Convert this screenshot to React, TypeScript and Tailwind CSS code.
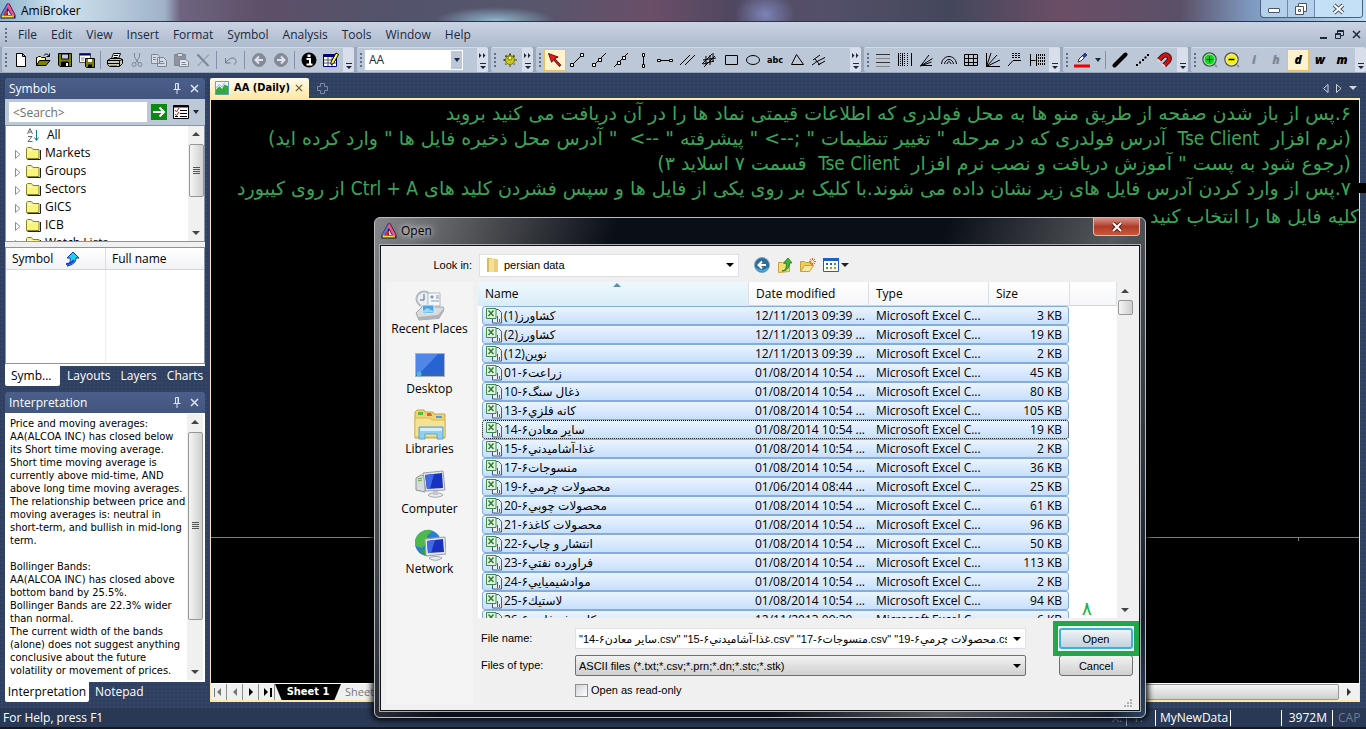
import React from 'react';
import clsx from 'clsx';

type Children = { children?: React.ReactNode };

const files = [
  ['(1)کشاورز', '12/11/2013 09:39 ...', '3 KB'],
  ['(2)کشاورز', '12/11/2013 09:39 ...', '19 KB'],
  ['(12)نوین', '12/11/2013 09:39 ...', '2 KB'],
  ['01-۶زراعت', '01/08/2014 10:54 ...', '45 KB'],
  ['10-۶ذغال سنگ', '01/08/2014 10:54 ...', '80 KB'],
  ['13-۶کانه فلزي', '01/08/2014 10:54 ...', '105 KB'],
  ['14-۶سایر معادن', '01/08/2014 10:54 ...', '19 KB'],
  ['15-۶غذا-آشامیدني', '01/08/2014 10:54 ...', '2 KB'],
  ['17-۶منسوجات', '01/08/2014 10:54 ...', '36 KB'],
  ['19-۶محصولات چرمي', '01/06/2014 08:44 ...', '25 KB'],
  ['20-۶محصولات چوبي', '01/08/2014 10:54 ...', '61 KB'],
  ['21-۶محصولات کاغذ', '01/08/2014 10:54 ...', '96 KB'],
  ['22-۶انتشار و چاپ', '01/08/2014 10:54 ...', '50 KB'],
  ['23-۶فراورده نفتي', '01/08/2014 10:54 ...', '113 KB'],
  ['24-۶موادشیمیایي', '01/08/2014 10:54 ...', '2 KB'],
  ['25-۶لاستیك', '01/08/2014 10:54 ...', '94 KB'],
  ['26-۶کاني غیرفلزي', '12/11/2013 09:39 ...', '6 KB'],
];

const focusedFile = 6;

const interpretation = [
  'Price and moving averages:',
  'AA(ALCOA INC) has closed below',
  'its Short time moving average.',
  'Short time moving average is',
  'currently above mid-time, AND',
  'above long time moving averages.',
  'The relationship between price and',
  'moving averages is: neutral in',
  'short-term, and bullish in mid-long',
  'term.',
  '',
  'Bollinger Bands:',
  'AA(ALCOA INC) has closed above',
  'bottom band by 25.5%.',
  'Bollinger Bands are 22.3% wider',
  'than normal.',
  'The current width of the bands',
  '(alone) does not suggest anything',
  'conclusive about the future',
  'volatility or movement of prices.',
];

/* ---------- icons ---------- */

function Ico({ children, size = 16 }: Children & { size?: number }) {
  return (
    <svg
      width={size}
      height={size}
      viewBox="0 0 16 16"
      fill="none"
      stroke="#000"
      className="shrink-0"
      aria-hidden="true"
    >
      {children}
    </svg>
  );
}

const Logo = () => (
  <Ico>
    <path d="M7 .5h2.500L15.500 12v3.500H.5V12z" fill="#1b1330" stroke="none" />
    <path d="M7 1.500L1 12l2 1.500L8.500 4z" fill="#5a78e0" stroke="none" />
    <path d="M7.500 1H9l6 11.500-2.500 1L7 3.500z" fill="#f0508c" stroke="none" />
    <path d="M1.500 12.500h10.500l2.500 2H1.500z" fill="#f8e040" stroke="none" />
    <path d="M3.500 12l3-5.500 2 3L7 12z" fill="#d82828" stroke="none" />
    <path d="M8 7l3 5H8z" fill="#c9d4f8" stroke="none" />
    <path d="M12 12.500l1-.5 1.500 2h-2z" fill="#f8a030" stroke="none" />
  </Ico>
);

const icons = {
  new: (
    <Ico>
      <path d="M3.500 1.500h6l3 3v10h-9zM9.500 1.500v3h3" fill="#fff" />
    </Ico>
  ),
  open: (
    <Ico>
      <path d="M1.500 13.500v-8h1l1-1h2l1 1h4v3" fill="#ffff9c" />
      <path d="M1.500 13.500l3-5h10.500l-4 5z" fill="#808000" />
      <path d="M9 3.500c1-2 4-2 5 .5M14.500 1.500v3h-3" />
    </Ico>
  ),
  save: (
    <Ico>
      <path d="M1.500 1.500h13v13H3l-1.500-1.500z" fill="#808000" />
      <path d="M4.500 2h7v5h-7z" fill="#c3cbdb" />
      <path d="M4.500 10h7v4.500h-7z" fill="#000" />
      <path d="M9 11h2v3H9z" fill="#fff" stroke="none" />
    </Ico>
  ),
  saveAll: (
    <Ico>
      <path d="M.5 1.500h11v9H.5z" fill="#fff" stroke="#555" />
      <path d="M.5 2.500h11" stroke="#00007c" strokeWidth="2" />
      <path d="M2 6h4M2 8h3" stroke="#888" />
      <path d="M6.500 6.500h9v9h-8l-1-1z" fill="#808000" />
      <path d="M9 7h4v3H9z" fill="#fff" stroke="none" />
      <path d="M9 12.500h4v3H9z" fill="#000" stroke="none" />
    </Ico>
  ),
  print: (
    <Ico>
      <path d="M4.500 6.500l2-5h7l-2 5" fill="#fff" />
      <path d="M7 3.500h4M6.500 5.500h4" />
      <path d="M.5 8.500l3-2h10l2 1v4l-3 3h-10l-2-2z" fill="#c8c8b0" />
      <path d="M.5 8.500h12v5.500M12.500 8.500l3-1M1 11.500h11" />
      <path d="M3 13.500h7" stroke="#a5a500" />
    </Ico>
  ),
  cut: (
    <Ico>
      <g stroke="#7f8794">
        <path d="M5.500 1v4l4 6M10.500 1v4l-4 6" />
        <circle cx="5" cy="12.500" r="2" />
        <circle cx="11" cy="12.500" r="2" />
      </g>
    </Ico>
  ),
  copy: (
    <Ico>
      <g stroke="#7f8794" fill="#d3dae6">
        <path d="M.5 2.500h6l2 2v7h-8zM6.500 5.500h6l3 3v6h-9z" />
        <path d="M2 5.500h3M2 7.500h3M8.500 9.500h4M8.500 11.500h5" />
      </g>
    </Ico>
  ),
  paste: (
    <Ico>
      <path d="M1.500 2.500h11v11h-11z" fill="#8e95a1" stroke="#7f8794" />
      <path d="M4.500 1.500h5v3h-5z" fill="#d3dae6" stroke="#7f8794" />
      <path d="M6.500 7.500h6l3 2v5h-9z" fill="#e0e5ee" stroke="#7f8794" />
      <path d="M8.500 10.500h4M8.500 12.500h5" stroke="#7f8794" />
    </Ico>
  ),
  del: (
    <Ico>
      <path d="M2 2.500l11 11.500M14 2.500L2.500 14" stroke="#7f8794" />
      <path d="M2.500 2.500l11 11.500" stroke="#7f8794" strokeWidth="2" />
    </Ico>
  ),
  undo: (
    <Ico>
      <path d="M2.500 6v5h5M3 10.500c3-5 9-6 10-2 .5 2-.5 3-2 4" stroke="#6f7886" />
    </Ico>
  ),
  back: (
    <Ico>
      <circle cx="8" cy="8" r="6.500" fill="#858b96" stroke="#858b96" />
      <path d="M12 8H5M8 4.500L4.500 8 8 11.500" stroke="#dfe4ee" strokeWidth="2" />
    </Ico>
  ),
  forward: (
    <Ico>
      <circle cx="8" cy="8" r="6.500" fill="#858b96" stroke="#858b96" />
      <path d="M4 8h7M8 4.500L11.500 8 8 11.500" stroke="#dfe4ee" strokeWidth="2" />
    </Ico>
  ),
  info: (
    <Ico>
      <circle cx="8" cy="8" r="7.500" fill="#000" stroke="none" />
      <path d="M5.500 7H9v5M5.500 12.500h6" stroke="#fff" strokeWidth="2" />
      <path d="M6.500 2.500h3v2.500h-3z" fill="#fff" stroke="none" />
    </Ico>
  ),
  edit: (
    <Ico>
      <path d="M.5 2.500h13v12H.5z" fill="#fff" stroke="#00007c" />
      <path d="M1 3.500h12" stroke="#00007c" strokeWidth="3" />
      <path d="M1 8h12M1 11h12M5 5v9M9 5v9" stroke="#555" />
      <path d="M8 10l5-9 2.500 1.500-5 9-2.500 1z" fill="#ffff60" />
    </Ico>
  ),
  gear: (
    <Ico>
      <path
        d="M8 1.500v13M1.500 8h13M3.500 3.500l9 9M12.500 3.500l-9 9"
        stroke="#4a4a10"
        strokeWidth="2"
        strokeDasharray="2 1"
      />
      <circle cx="8" cy="8" r="4.500" fill="#c8c820" stroke="#77770c" />
      <circle cx="8" cy="6" r="2" fill="#ffff70" stroke="#77770c" />
    </Ico>
  ),
  arrow: (
    <Ico>
      <path d="M1 1l3.500 10 2-2.500 6 6.500 2-2-6-6L12 5z" fill="#555" stroke="none" />
      <path d="M1.500 1.500l3 8.500 2-2.500 6 7 1-1.500-6-6.500 3.500-1.500z" fill="#f01818" stroke="#600" strokeWidth=".6" />
    </Ico>
  ),
  line: (
    <Ico>
      <path d="M4 12l8-8" />
      <path d="M1.500 11.500h3v3h-3zM11.500 1.500h3v3h-3z" fill="#fff" />
    </Ico>
  ),
  ray: (
    <Ico>
      <path d="M2 14L15 1" />
      <path d="M1.500 11.500h3v3h-3zM7.500 6.500h3v3h-3z" fill="#fff" />
    </Ico>
  ),
  extended: (
    <Ico>
      <path d="M1 15L15 1" />
      <path d="M4.500 9.500h3v3h-3zM9.500 4.500h3v3h-3z" fill="#fff" />
    </Ico>
  ),
  vertical: (
    <Ico>
      <path d="M8.500 2v12" />
      <path d="M7.500 1.500h2v3h-2zM7.500 12.500h2v3h-2z" fill="#fff" />
    </Ico>
  ),
  horizontal: (
    <Ico>
      <path d="M2 8.500h12" />
      <path d="M.5 7.500h3v2h-3zM12.500 7.500h3v2h-3z" fill="#fff" />
    </Ico>
  ),
  parallel: (
    <Ico>
      <path d="M1 13L11 3M6 13L16 3" />
    </Ico>
  ),
  hatch: (
    <Ico>
      <path d="M1 12L11 2M3 15L14 4M2 8l13-2M2 12l11-3M5 4v9M9 3v10M12 1v9" />
    </Ico>
  ),
  rect: (
    <Ico>
      <path d="M2.500 3.500h12v9h-12z" />
    </Ico>
  ),
  ellipse: (
    <Ico>
      <ellipse cx="8" cy="8" rx="6.500" ry="4.500" />
    </Ico>
  ),
  triangle: (
    <Ico>
      <path d="M7.500 2.500l7 10h-12z" />
    </Ico>
  ),
  pitchfork: (
    <Ico>
      <path d="M2 8l7-5M4 10.500l10-5M7 13l7-4M4 7l5 6M1 13l3-2" />
    </Ico>
  ),
  fibRet: (
    <Ico>
      <path d="M1 2.500h14M1 10.500h14" stroke="#333" />
      <path d="M1 6.500h14M1 14.500h14" stroke="#888" />
    </Ico>
  ),
  fibTime: (
    <Ico>
      <path d="M1.500 1v13M5.500 1v13M14.500 1v13" />
      <path d="M3.500 1v13M7.500 1v13M10.500 1v13" strokeDasharray="1 1" />
    </Ico>
  ),
  fan: (
    <Ico>
      <path d="M1.500 14L10 3M1.500 14l12-7.500M1.500 14l11-4M2 13.500h11" />
    </Ico>
  ),
  arcs: (
    <Ico>
      <path d="M.5 12c1-10 14-10 15 0M3.500 12c1-6 8-6 9 0M6 12c.5-3 3.500-3 4 0" />
    </Ico>
  ),
  gannSquare: (
    <Ico>
      <path d="M1.500 2.500h13v11h-13zM5.500 2.500v11M10.500 2.500v11M1.500 6.500h13M1.500 10.500h13" />
    </Ico>
  ),
  gannFan: (
    <Ico>
      <path d="M1.500 1v13.500H15M1.500 14.500L6 1M1.500 14.500L12 3M1.500 14.500L15 8" />
    </Ico>
  ),
  fibExt: (
    <Ico>
      <path d="M1 14l5-5.500M6 8.500h8" />
      <path d="M5 1.500h9M5 3.500h9M5 5.500h9" strokeDasharray="2 1" />
    </Ico>
  ),
  timeExt: (
    <Ico>
      <path d="M1.500 2v12M1.500 8.500h5M7.500 2v12" />
      <path d="M9.500 2v12M11.500 2v12M13.500 2v12M15.500 2v12" strokeDasharray="2 1" />
    </Ico>
  ),
  color: (
    <Ico>
      <path d="M4 10l1-3 6-6 2 2-6 6z" fill="#fff" stroke="#333" />
      <path d="M8 4l3-3 2 2-3 3z" fill="#2c3fa0" stroke="none" />
      <path d="M0 12.500h16v3H0z" fill="#f00000" stroke="none" />
    </Ico>
  ),
  thick: (
    <Ico>
      <path d="M2.500 13.500l11-11" strokeWidth="4" strokeLinecap="round" />
    </Ico>
  ),
  dotted: (
    <Ico>
      <path d="M2 13h2M5 10.500h2M8 8h2M10.500 5.500h2M13 3h2" strokeWidth="2" />
    </Ico>
  ),
  magnet: (
    <Ico>
      <path d="M3 8l4-4c4-3 8 1 5.500 5L8 13.500" stroke="#4a0808" strokeWidth="5" />
      <path d="M3 8l4-4c4-3 8 1 5.500 5L8 13.500" stroke="#c81818" strokeWidth="3" />
      <path d="M1.500 7.500l3 2.500M6 12l3 3" stroke="#d8d8d8" strokeWidth="2" />
    </Ico>
  ),
  zoomIn: (
    <Ico>
      <circle cx="7.500" cy="7.500" r="6.500" fill="#10d818" stroke="#3d5548" strokeWidth="1.500" />
      <circle cx="7.500" cy="7.500" r="5.500" stroke="#cfe8d0" />
      <path d="M13 13l2 2" stroke="#8d94a0" strokeWidth="2" />
      <path d="M4.500 7.500h6M7.500 4.500v6" />
    </Ico>
  ),
  zoomOut: (
    <Ico>
      <circle cx="7.500" cy="7.500" r="6.500" fill="#f8f010" stroke="#555538" strokeWidth="1.500" />
      <circle cx="7.500" cy="7.500" r="5.500" stroke="#efefcf" />
      <path d="M13 13l2 2" stroke="#8d94a0" strokeWidth="2" />
      <path d="M4.500 7.500h6" strokeWidth="1.500" />
    </Ico>
  ),
};

type IconName = keyof typeof icons;

const Folder = () => (
  <Ico>
    <path d="M2.500 14.500h13V5" stroke="#222" />
    <path d="M1.500 13.500v-10l1-1h4l1.500 2h6v9z" fill="#f8f47c" stroke="#8a8428" />
    <path d="M2.500 5.500h5" stroke="#fffde0" />
  </Ico>
);

const ExcelIcon = () => (
  <Ico>
    <path d="M6.500 1.500h6l3 3v10.500h-9z" fill="#e9eff8" stroke="#405a80" />
    <path d="M11.500 8v6M13.500 11v3" stroke="#3c5f98" />
    <path d="M.5.500h9.500v10H.5z" fill="#e6f4e2" stroke="#3f8a4a" />
    <path d="M2.500 2.500l5 5.500M7.500 2.500l-5 5.500" stroke="#2b7d38" strokeWidth="1.500" />
  </Ico>
);

const Pin = () => (
  <svg width="8" height="11" viewBox="0 0 8 11" fill="none" stroke="#dfe5f0" aria-hidden="true">
    <path d="M2.500 6.500v-6h3v6M.5 6.500h7M4 7v4M5 1v5" />
  </svg>
);

const Cross = ({ color = '#dfe5f0', size = 9 }: { color?: string; size?: number }) => (
  <svg width={size} height={size} viewBox="0 0 9 9" fill="none" stroke={color} strokeWidth="1.500" aria-hidden="true">
    <path d="M1 1l7 7M8 1L1 8" />
  </svg>
);

const Caret = ({ dir = 'down', color = '#222' }: { dir?: 'up' | 'down' | 'left' | 'right'; color?: string }) => {
  const d = {
    up: 'M0 6l4-4 4 4z',
    down: 'M0 2l4 4 4-4z',
    left: 'M6 0L2 4l4 4z',
    right: 'M2 0l4 4-4 4z',
  }[dir];
  return (
    <svg width="8" height="8" viewBox="0 0 8 8" fill={color} aria-hidden="true">
      <path d={d} />
    </svg>
  );
};

/* ---------- toolbar ---------- */

function Tool({ name, active }: { name: IconName; active?: boolean }) {
  return (
    <button
      type="button"
      aria-label={name}
      className={clsx(
        'flex h-[22px] w-[22px] shrink-0 items-center justify-center',
        active && 'border border-[#e5c365] bg-[#fff3cf]'
      )}
    >
      {icons[name]}
    </button>
  );
}

function Letter({ children, active, muted }: Children & { active?: boolean; muted?: boolean }) {
  return (
    <button
      type="button"
      className={clsx(
        "flex h-[22px] w-[22px] shrink-0 items-center justify-center font-['Open_Sans',sans-serif] text-[12px] leading-4 font-extrabold italic",
        active && 'border border-[#e5c365] bg-[#fff3cf]',
        muted ? 'text-[#7f8794]' : 'text-black'
      )}
    >
      {children}
    </button>
  );
}

const Divider = () => <span className="mx-[2px] h-[18px] w-[2px] shrink-0 border-l border-[#8591a8]" />;

const Overflow = ({ more }: { more?: boolean }) => (
  <button
    type="button"
    aria-label="Toolbar options"
    className="ml-auto flex h-full w-[11px] shrink-0 flex-col items-center justify-end gap-[5px] bg-[#d8dfea] pb-[3px]"
  >
    {more && (
      <svg width="7" height="5" viewBox="0 0 7 5" fill="#1b293e" aria-hidden="true">
        <path d="M0 0l2.500 2.500L0 5zM4 0l2.500 2.500L4 5z" />
      </svg>
    )}
    <svg width="6" height="6" viewBox="0 0 6 6" fill="#1b293e" aria-hidden="true">
      <path d="M0 0h6v1H0zM0 3h6L3 6z" />
    </svg>
  </button>
);

function Group({ children, width, more }: Children & { width: string; more?: boolean }) {
  return (
    <div className={clsx('flex h-[25px] items-center overflow-hidden rounded-[2px] border-t border-[#d3dbe7] bg-[#bcc7d8]', width)}>
      <span className="mx-[3px] h-[14px] w-[2px] shrink-0 bg-[repeating-linear-gradient(#5f6f8c_0_2px,transparent_2px_4px)]" />
      {children}
      <Overflow more={more} />
    </div>
  );
}

function Toolbar() {
  return (
    <div className="flex h-[26px] shrink-0 gap-[3px] bg-[#9ba9c0] pl-[2px]">
      <Group width="w-[352px] shrink-0">
        <Tool name="new" />
        <Tool name="open" />
        <Tool name="save" />
        <Tool name="saveAll" />
        <Divider />
        <Tool name="print" />
        <Tool name="cut" />
        <Tool name="copy" />
        <Tool name="paste" />
        <Tool name="del" />
        <Divider />
        <Tool name="undo" />
        <Divider />
        <Tool name="back" />
        <Tool name="forward" />
        <Divider />
        <Tool name="info" />
        <Tool name="edit" />
      </Group>
      <Group width="w-[131px] shrink-0" more>
        <div className="flex h-[20px] w-[98px] border border-white bg-white">
          <input
            aria-label="Ticker"
            defaultValue="AA"
            className="w-full min-w-0 px-[3px] text-[12px] leading-4 text-[#1b293e]"
          />
          <button type="button" aria-label="Choose ticker" className="flex w-[11px] shrink-0 items-center justify-center bg-[#bcc7d8]">
            <svg width="6" height="4" viewBox="0 0 6 4" fill="#1b293e" aria-hidden="true">
              <path d="M0 0h6L3 4z" />
            </svg>
          </button>
        </div>
      </Group>
      <Group width="w-[42px] shrink-0" more>
        <Tool name="gear" />
      </Group>
      <Group width="w-[325px] shrink-0" more>
        <Tool name="arrow" active />
        <Tool name="line" />
        <Tool name="ray" />
        <Tool name="extended" />
        <Tool name="vertical" />
        <Tool name="horizontal" />
        <Tool name="parallel" />
        <Tool name="hatch" />
        <Tool name="rect" />
        <Tool name="ellipse" />
        <button type="button" className="w-[22px] shrink-0 text-center font-['DejaVu_Sans_Condensed',sans-serif] text-[9px] leading-4 font-bold text-black">
          abc
        </button>
        <Tool name="triangle" />
        <Tool name="pitchfork" />
      </Group>
      <Group width="w-[196px] shrink-0">
        <Tool name="fibRet" />
        <Tool name="fibTime" />
        <Tool name="fan" />
        <Tool name="arcs" />
        <Tool name="gannSquare" />
        <Tool name="gannFan" />
        <Tool name="fibExt" />
        <Tool name="timeExt" />
      </Group>
      <Group width="w-[125px] shrink-0">
        <Tool name="color" />
        <button type="button" aria-label="Line colours" className="flex w-[10px] shrink-0 justify-center">
          <svg width="6" height="4" viewBox="0 0 6 4" fill="#1b293e" aria-hidden="true">
            <path d="M0 0h6L3 4z" />
          </svg>
        </button>
        <Divider />
        <Tool name="thick" />
        <Tool name="dotted" />
        <Tool name="magnet" />
      </Group>
      <Group width="min-w-0 flex-1">
        <Tool name="zoomIn" />
        <Tool name="zoomOut" />
        <Letter muted>i</Letter>
        <Letter muted>h</Letter>
        <Letter active>d</Letter>
        <Letter>w</Letter>
        <Letter>m</Letter>
      </Group>
    </div>
  );
}

/* ---------- window chrome ---------- */

function TitleBar() {
  return (
    <header className="flex h-[22px] shrink-0 items-start border-b border-[#38303e] bg-[radial-gradient(60px_14px_at_495px_100%,#8fb8cc,transparent),radial-gradient(30px_24px_at_765px_70%,#7d84b8,transparent),linear-gradient(90deg,#8fb4cc_0,#cfe2f0_60px,#b4c8da_120px,#9fb2c8_165px,#6f6480_180px,#5d5068_260px,#53536c_400px,#57566c_540px,#6b4e68_650px,#504860_730px,#55506a_820px,#43475c_950px,#6b4e66_1060px,#5a5068_1180px,#7d98be_1250px,#c0dcf2)]">
      <div className="flex h-[21px] items-center gap-[5px]">
        <Logo />
        <h1 className="text-[12px] leading-4 text-black">AmiBroker</h1>
      </div>
      <div className="mr-[3px] ml-auto flex h-[18px] overflow-hidden rounded-b-[4px] border border-t-0 border-[#48607e] bg-[#b5d0ea]">
        <button type="button" aria-label="Minimize" className="flex w-[27px] items-center justify-center border-r border-[#6d88a8] pt-[3px]">
          <span className="h-[5px] w-[12px] rounded-[1px] border border-[#4a5568] bg-white" />
        </button>
        <button type="button" aria-label="Restore" className="flex w-[27px] items-center justify-center border-r border-[#6d88a8]">
          <svg width="12" height="12" viewBox="0 0 12 12" fill="#fff" stroke="#4a5568" aria-hidden="true">
            <path d="M3.500.5h8v8h-8z" />
            <path d="M.5 3.500h8v8h-8zM3.500 6.500h2v2h-2z" />
          </svg>
        </button>
        <button type="button" aria-label="Close" className="flex w-[47px] items-center justify-center bg-[#c4e0f6]">
          <svg width="13" height="12" viewBox="0 0 13 12" fill="none" aria-hidden="true">
            <path d="M2 2l9 8M11 2L2 10" stroke="#4a5568" strokeWidth="4" />
            <path d="M2 2l9 8M11 2L2 10" stroke="#fff" strokeWidth="2" />
          </svg>
        </button>
      </div>
    </header>
  );
}

function MenuBar() {
  const menus = ['File', 'Edit', 'View', 'Insert', 'Format', 'Symbol', 'Analysis', 'Tools', 'Window', 'Help'];
  return (
    <nav className="flex h-[25px] shrink-0 items-center bg-gradient-to-b from-[#cad3e2] to-[#aebace] pl-[5px] text-[12px] leading-4 text-[#1b293e]">
      <span className="mr-[4px] h-[14px] w-[2px] bg-[repeating-linear-gradient(#5f6f8c_0_2px,transparent_2px_4px)]" />
      {menus.map(menu => (
        <button key={menu} type="button" className="px-[7px]">
          {menu}
        </button>
      ))}
      <div className="mr-[5px] ml-auto flex items-center gap-[8px]">
        <button type="button" aria-label="Minimize document" className="h-[9px] w-[7px] border-b-2 border-[#1b293e]" />
        <button type="button" aria-label="Restore document">
          <svg width="9" height="9" viewBox="0 0 9 9" fill="none" stroke="#1b293e" aria-hidden="true">
            <path d="M2.500 3V.5h6v5H6M.5 3.500h5v5h-5zM2.500 1.500h6M.5 4.500h5" />
          </svg>
        </button>
        <button type="button" aria-label="Close document">
          <Cross color="#1b293e" />
        </button>
      </div>
    </nav>
  );
}

function PanelHeader({ title }: { title: string }) {
  return (
    <div className="flex h-[21px] shrink-0 items-center gap-[9px] rounded-t-[3px] bg-gradient-to-b from-[#4a5f8a] to-[#42557e] pr-[6px] pl-[4px]">
      <h2 className="mr-auto text-[12px] leading-4 text-white">{title}</h2>
      <button type="button" aria-label={`Pin ${title}`}>
        <Pin />
      </button>
      <button type="button" aria-label={`Close ${title}`}>
        <Cross />
      </button>
    </div>
  );
}

function ScrollBar({ thumb }: { thumb: string }) {
  return (
    <div className="flex w-[16px] shrink-0 flex-col items-center bg-[#f0f0f0] py-[4px]" aria-hidden="true">
      <Caret dir="up" color="#444" />
      <div className={clsx('mt-[6px] flex w-[15px] items-center justify-center rounded-[2px] border border-[#979797] bg-gradient-to-r from-[#f5f5f5] to-[#cfcfcf]', thumb)}>
        <span className="h-[8px] w-[7px] bg-[repeating-linear-gradient(#555_0_1px,transparent_1px_2px)]" />
      </div>
      <span className="mt-auto">
        <Caret color="#444" />
      </span>
    </div>
  );
}

function SymbolsPanel() {
  const folders = ['Markets', 'Groups', 'Sectors', 'GICS', 'ICB', 'Watch Lists'];
  return (
    <section className="flex flex-col">
      <PanelHeader title="Symbols" />
      <div className="flex h-[26px] items-center bg-[#bcc7d8] px-1">
        <input
          aria-label="Search symbols"
          placeholder="<Search>"
          className="h-[20px] w-[138px] bg-white px-1 text-[12px] leading-4 placeholder:text-[#6d6d6d]"
        />
        <button type="button" aria-label="Go" className="ml-1">
          <Ico>
            <path d="M0 0h16v16H0z" fill="#0a8a12" stroke="none" />
            <path d="M2 8h11M8.500 3.500L13 8l-4.500 4.500" stroke="#fff" strokeWidth="2" />
          </Ico>
        </button>
        <button type="button" aria-label="Options" className="ml-[6px] flex items-center gap-[4px]">
          <Ico>
            <path d="M.5 1.500h15v13H.5z" fill="#fff" />
            <path d="M1 2.500h14" strokeWidth="2" />
            <path d="M7 6.500h7M7 9.500h7M7 12.500h7M2 12.500h3" />
            <path d="M2 6l1.500 2L6 4M2 10l1.500 1.500L6 8" stroke="#e01010" />
          </Ico>
          <svg width="6" height="4" viewBox="0 0 6 4" fill="#1b293e" aria-hidden="true">
            <path d="M0 0h6L3 4z" />
          </svg>
        </button>
      </div>
      <div className="flex h-[117px] overflow-hidden border border-[#8a94a6] bg-white">
        <ul className="flex-1 pl-[9px] text-[12px] leading-[18px] text-black">
          <li className="flex items-center gap-[5px] pl-[11px]">
            <Ico>
              <path d="M1.500 7L4 1.500 6.500 7M2.500 5h3M2 9.500h4l-4 5h4.500" stroke="#666" />
              <path d="M10.500 3v10M8.500 10.500l2 3 2-3" stroke="#0a7c86" />
            </Ico>
            All
          </li>
          {folders.map(name => (
            <li key={name} className="flex items-center gap-[4px]">
              <svg width="6" height="9" viewBox="0 0 6 9" fill="#fff" stroke="#8c8c8c" className="mt-[3px]" aria-hidden="true">
                <path d="M.5.500L5 4.500.500 8.500z" />
              </svg>
              <Folder />
              {name}
            </li>
          ))}
        </ul>
        <ScrollBar thumb="h-[53px]" />
      </div>
      <div className="h-[5px] bg-[#f0f0f0]" />
      <table className="flex h-[117px] flex-col border border-[#8a94a6] bg-white text-left text-[12px] leading-4 text-black">
        <thead className="block">
          <tr className="flex h-[22px] items-center border-b border-[#d5d5d5] bg-gradient-to-b from-white to-[#f2f3f5]">
            <th className="flex w-[99px] items-center gap-[11px] pl-[6px] font-normal">
              Symbol
              <Ico>
                <path d="M9 1l6 6h-3c0 4-3 7-9 8 2-1 4-4 3-8H3z" fill="#20d0e0" stroke="#1838b8" />
                <path d="M2 13c4 0 6-1 8-4" stroke="#2038e0" strokeWidth="2" />
              </Ico>
            </th>
            <th className="flex h-full items-center border-l border-[#dedfe1] pl-[6px] font-normal">Full name</th>
          </tr>
        </thead>
        <tbody className="flex flex-1">
          <tr className="flex flex-1">
            <td className="w-[99px]" />
            <td className="flex-1 border-l border-[#e8eef4]" />
          </tr>
        </tbody>
      </table>
      <div className="flex h-[22px] items-center rounded-b-[2px] border-t-2 border-white text-[12px] leading-4 text-white">
        <button type="button" className="h-full w-[55px] rounded-b-[2px] bg-white pl-[6px] text-left text-black">
          Symb...
        </button>
        <button type="button" className="pl-[7px]">Layouts</button>
        <button type="button" className="pl-[10px]">Layers</button>
        <button type="button" className="pl-[10px]">Charts</button>
      </div>
    </section>
  );
}

function InterpretationPanel() {
  return (
    <section className="flex min-h-0 flex-1 flex-col">
      <PanelHeader title="Interpretation" />
      <div className="flex min-h-0 flex-1 border-t border-r-2 border-white bg-white">
        <div className="min-w-0 flex-1 overflow-hidden pt-[3px] pl-[5px] font-['DejaVu_Sans_Condensed',sans-serif] text-[11px] leading-[13px] whitespace-nowrap text-black">
          {interpretation.map((line, i) => (
            <p key={i} className="h-[13px]">
              {line}
            </p>
          ))}
        </div>
        <ScrollBar thumb="h-[188px]" />
      </div>
      <div className="flex h-[22px] shrink-0 items-center border-t-2 border-white text-[12px] leading-4 text-white">
        <button type="button" className="h-full w-[84px] rounded-b-[2px] bg-white text-black">
          Interpretation
        </button>
        <button type="button" className="pl-[6px]">Notepad</button>
      </div>
    </section>
  );
}

function Latin({ children }: Children) {
  return <span className="font-['DejaVu_Sans_Condensed',sans-serif]">{children}</span>;
}

function Chart() {
  return (
    <main className="flex min-w-0 flex-1 flex-col">
      <div className="flex h-[20px] shrink-0 items-center">
        <div className="flex h-full w-[99px] items-center gap-[5px] rounded-t-[2px] bg-gradient-to-b from-[#fffaec] to-[#ffe8a6] pl-[5px] text-[12px] leading-4 font-bold text-black">
          <Ico size={14}>
            <path d="M.5.500h15v15H.5z" fill="#eaf4fb" stroke="#4b8fc4" />
            <path d="M1 15v-5l4-4 3 3 3-5 4 2v9z" fill="#37a83c" stroke="none" />
            <path d="M1 8l4-4 3 3 3-5" stroke="#6db4e4" />
          </Ico>
          <span className="font-['DejaVu_Sans_Condensed',sans-serif] text-[11px] whitespace-nowrap">AA (Daily)</span>
          <button type="button" aria-label="Close tab">
            <Cross color="#75633d" size={8} />
          </button>
        </div>
        <button type="button" aria-label="New tab" className="ml-[8px]">
          <svg width="11" height="11" viewBox="0 0 11 11" fill="none" stroke="#7d8aa4" aria-hidden="true">
            <path d="M3.500.5h4v3h3v4h-3v3h-4v-3h-3v-4h3z" />
          </svg>
        </button>
        <div className="mr-[3px] ml-auto flex items-center gap-[7px]">
          <button type="button" aria-label="Previous tab">
            <svg width="6" height="9" viewBox="0 0 6 9" fill="none" stroke="#ced4dd" aria-hidden="true">
              <path d="M5 .5v8L.5 4.500z" />
            </svg>
          </button>
          <button type="button" aria-label="Next tab">
            <svg width="6" height="9" viewBox="0 0 6 9" fill="none" stroke="#ced4dd" aria-hidden="true">
              <path d="M.5.500v8L5 4.500z" />
            </svg>
          </button>
          <button type="button" aria-label="Tab list">
            <Caret color="#ced4dd" />
          </button>
        </div>
      </div>
      <div className="flex min-h-0 flex-1 flex-col border-x border-y-2 border-[#ffe8a6] bg-black">
        <div className="flex min-h-0 flex-1 flex-col">
          <div
            dir="rtl"
            className="flex min-h-0 flex-[3] flex-col border-b border-[#7d7d7d] pt-px pr-[8px] font-['DejaVu_Sans',sans-serif] text-[19px] leading-[25px] whitespace-nowrap text-[#3aa655]"
          >
            <p>۶.پس از باز شدن صفحه از طریق منو ها به محل فولدری که اطلاعات قیمتی نماد ها را در آن دریافت می کنید بروید</p>
            <p>
              (نرم افزار <Latin>&nbsp;Tse Client&nbsp;</Latin> آدرس فولدری که در مرحله " تغییر تنظیمات " ;--&gt; " پیشرفته " --&gt; &nbsp;" آدرس محل ذخیره فایل ها " وارد کرده اید)
            </p>
            <p>
              (رجوع شود به پست " آموزش دریافت و نصب نرم افزار <Latin>&nbsp;Tse Client&nbsp;</Latin> قسمت ۷ اسلاید ۳)
            </p>
            <p>
              ۷.پس از وارد کردن آدرس فایل های زیر نشان داده می شوند.با کلیک بر روی یکی از فایل ها و سپس فشردن کلید های <Latin>Ctrl + A</Latin> از روی کیبورد
            </p>
            <p className="-mr-[8px] pt-[3px]">کلیه فایل ها را انتخاب کنید</p>
          </div>
          <div className="flex flex-1 justify-end pr-[60px]">
            <span className="h-[3px] w-px bg-[#7d7d7d]" />
          </div>
        </div>
        <div className="flex h-[17px] shrink-0 items-stretch border-t border-white bg-[#f0f0f0]">
          {['first', 'previous', 'next', 'last'].map((name, i) => (
            <button key={name} type="button" aria-label={`${name} sheet`} className="flex w-[16px] items-center justify-center border-r border-[#8c8c8c]">
              {i === 0 && <span className="h-[9px] w-px bg-[#777]" />}
              <Caret dir={i < 2 ? 'left' : 'right'} color={i < 2 ? '#777' : '#000'} />
              {i === 3 && <span className="h-[9px] w-[2px] bg-black" />}
            </button>
          ))}
          <button
            type="button"
            className="w-[66px] bg-black text-center font-['DejaVu_Sans_Condensed',sans-serif] text-[11px] leading-4 font-bold text-white [clip-path:polygon(0_0,100%_0,90%_100%,10%_100%)]"
          >
            Sheet 1
          </button>
          <button type="button" className="px-[4px] text-[11px] leading-4 whitespace-nowrap text-[#777]">
            Sheet 2
          </button>
          <div className="ml-[60px] flex flex-1 items-center pr-[6px]" aria-hidden="true">
            <span className="h-full flex-1 rounded-[2px] border border-[#979797] bg-gradient-to-b from-[#f5f5f5] to-[#cfcfcf]" />
            <span className="ml-[6px]">
              <Caret dir="right" color="#333" />
            </span>
          </div>
        </div>
      </div>
    </main>
  );
}

function StatusBar() {
  return (
    <footer className="flex h-[21px] shrink-0 items-center border-b-2 border-[#14181f] bg-[#293955] pl-[3px] text-[12px] leading-4 text-white">
      <p className="mr-auto">For Help, press F1</p>
      <span className="w-[14px] text-[#9aa4b6]">X:</span>
      <span className="w-[29px] border-l border-[#9aa4b6] pl-[6px] text-[#9aa4b6]">Y:</span>
      <span className="w-[76px] border-x border-white pl-[4px]">MyNewData</span>
      <span className="w-[50px]" />
      <span className="w-[52px] border-x border-white pr-[5px] text-right">3972M</span>
      <span className="w-[33px] pl-[5px] text-[#6f7b91]">CAP</span>
    </footer>
  );
}

/* ---------- open dialog ---------- */

const places = [
  {
    label: 'Recent Places',
    art: (
      <svg width="32" height="32" viewBox="0 0 32 32" aria-hidden="true">
        <circle cx="10" cy="10" r="7.500" fill="#e9eef3" stroke="#b3bbc5" strokeWidth="2" />
        <path d="M10 5v6H6" fill="none" stroke="#5e6a78" />
        <path d="M14 4h12v13H14z" fill="#f6f8fa" stroke="#b0b8c2" />
        <path d="M17 7h2v2h-2zM22 7h3M22 9h3M17 12h8" fill="#6b9bd0" stroke="#8799ae" />
        <path d="M2 24l6-6h21l1 2-5 9-20 2z" fill="#d9dbde" stroke="#a0a4a9" />
        <path d="M8 16h12v8l-11 1z" fill="#4ba4e4" stroke="#e0eef9" />
        <path d="M9 22l4-3 6 3v1l-10 1z" fill="#9ad8ee" />
        <path d="M4 28l20-2 6-7v3l-5 8-20 1z" fill="#b0b3b7" />
      </svg>
    ),
  },
  {
    label: 'Desktop',
    art: (
      <svg width="32" height="32" viewBox="0 0 32 32" aria-hidden="true">
        <path d="M1 4h30v24H1z" fill="#a7b4c6" />
        <path d="M2 5h28v19H2z" fill="#2863d2" />
        <path d="M2 5h22L6 24H2z" fill="#4f86e8" />
        <path d="M2 24h28v3H2z" fill="#3c64a8" />
        <circle cx="5" cy="25" r="2.500" fill="#4ab8e0" />
      </svg>
    ),
  },
  {
    label: 'Libraries',
    art: (
      <svg width="32" height="32" viewBox="0 0 32 32" aria-hidden="true">
        <path d="M1 3l2-2h7l1 2h8l1 2h11v24H1z" fill="#efd372" stroke="#c9a640" />
        <path d="M4 3h5v3H4zM14 5h4v2h-4z" fill="#55b848" />
        <path d="M13 4h4v3h-4z" fill="#e0603c" />
        <path d="M22 7h6v2h-6z" fill="#4c9ce0" />
        <path d="M1 9h15l2 2h13v17H1z" fill="#f6e294" stroke="#d8ba58" />
        <path d="M5 18h24v12h-6v-5H11v5H5z" fill="#8fd0ee" stroke="#5aa6cc" />
        <path d="M6 19h22v3H6z" fill="#d4effa" />
      </svg>
    ),
  },
  {
    label: 'Computer',
    art: (
      <svg width="32" height="32" viewBox="0 0 32 32" aria-hidden="true">
        <path d="M2 9l5-3 4 1v16l-9-2z" fill="#d8dbde" stroke="#8c9298" />
        <path d="M4 10l4-1M4 12l4-1" stroke="#5cae3c" />
        <path d="M9 4l20-2 2 19-19 1z" fill="#e4e7ea" stroke="#9aa0a6" />
        <path d="M11 6l17-2 1 15-16 1z" fill="#1832c0" />
        <path d="M11 6l9-1-4 15h-3z" fill="#4068e8" />
        <path d="M14 26c3-3 12-3 15 0-3 3-12 3-15 0z" fill="#e9ebed" stroke="#a1a6ab" />
        <path d="M19 22h5v4h-5z" fill="#c4c8cc" />
      </svg>
    ),
  },
  {
    label: 'Network',
    art: (
      <svg width="32" height="32" viewBox="0 0 32 32" aria-hidden="true">
        <circle cx="14" cy="14" r="13" fill="#2a7fd0" />
        <path d="M4 6c5-6 12-6 14-4l-5 5 1 6-6 6-6-2c-2-3-1-8 2-11z" fill="#4fb848" />
        <path d="M6 21l6-1 2 6-3 1z" fill="#3f9a40" />
        <path d="M11 10l20-2 1 17-20 2z" fill="#e4e7ea" stroke="#9aa0a6" />
        <path d="M13 12l16-2 1 13-16 1z" fill="#1832c0" />
        <path d="M13 12l8-1-4 13h-3z" fill="#4068e8" />
        <path d="M15 29c3-2 10-2 13 0-3 3-10 3-13 0z" fill="#e9ebed" stroke="#a1a6ab" />
      </svg>
    ),
  },
];

function FileList() {
  return (
    <div className="relative flex h-[336px] bg-white">
      <table className="block min-w-0 flex-1 overflow-hidden text-left text-[12px] text-black">
        <thead className="block">
          <tr className="grid h-[24px] grid-cols-[271px_120px_120px_81px_1fr] border-b border-[#d5d5d5] bg-gradient-to-b from-white to-[#f5f6f8] *:border-r *:border-[#dcdfe3] *:pl-[7px] *:leading-[24px] *:font-normal">
            <th className="relative bg-gradient-to-b from-[#eff8fc] to-[#d8edf7]">
              Name
              <svg width="8" height="4" viewBox="0 0 8 4" fill="#5c8ea8" className="absolute top-px left-1/2" aria-hidden="true">
                <path d="M0 4l4-4 4 4z" />
              </svg>
            </th>
            <th>Date modified</th>
            <th>Type</th>
            <th>Size</th>
            <td />
          </tr>
        </thead>
        <tbody className="block pl-[4px]">
          {files.map(([name, date, size], i) => (
            <tr
              key={name}
              className={clsx(
                'grid h-[19px] w-[587px] grid-cols-[266px_120px_119px_80px] rounded-[3px] border bg-gradient-to-b from-[#ebf4fe] to-[#c7dffc] leading-[18px]',
                i === focusedFile ? 'border-dotted border-black' : 'border-[#84acdd]'
              )}
            >
              <td className="flex items-center gap-[2px] pl-[3px] whitespace-nowrap">
                <ExcelIcon />
                <span dir="ltr" className="[font-family:'Open_Sans','DejaVu_Sans',sans-serif]">{name}</span>
              </td>
              <td className="pl-[6px] whitespace-nowrap">{date}</td>
              <td className="pl-[7px] whitespace-nowrap">Microsoft Excel C...</td>
              <td className="pr-[6px] text-right whitespace-nowrap">{size}</td>
            </tr>
          ))}
        </tbody>
      </table>
      <div className="flex w-[16px] shrink-0 flex-col items-center bg-[#f0f0f0] pt-[5px] pb-[4px]" aria-hidden="true">
        <Caret dir="up" color="#444" />
        <span className="mt-[5px] h-[15px] w-[15px] rounded-[2px] border border-[#979797] bg-gradient-to-r from-[#f5f5f5] to-[#cfcfcf]" />
        <span className="mt-auto">
          <Caret color="#444" />
        </span>
      </div>
      <span className="absolute right-[41px] bottom-0 font-['DejaVu_Sans',sans-serif] text-[19px] leading-5 text-[#22b14c]">۸</span>
    </div>
  );
}

function OpenDialog() {
  return (
    <div
      role="dialog"
      aria-label="Open"
      className="absolute top-[217px] left-[374px] flex w-[772px] flex-col rounded-[6px] border border-[#b9bdc4] bg-[linear-gradient(110deg,#85878a_0,#4a4c50_110px,#0a0e16_230px,#0a0e16_540px,#55585c_700px,#16202c_860px,#2c4460)] px-[5px] pb-[6px] shadow-[0_0_6px_2px_#000]"
    >
      <div className="flex h-[27px] items-start gap-[4px] pl-px">
        <span className="pt-[5px]">
          <Logo />
        </span>
        <h2 className="pt-[5px] text-[12px] leading-4 text-black [text-shadow:0_0_4px_#ddd,0_0_8px_#ccc,0_0_12px_#aaa]">Open</h2>
        <button
          type="button"
          aria-label="Close dialog"
          className="ml-auto flex h-[18px] w-[47px] items-center justify-center rounded-b-[4px] border border-t-0 border-[#e0b8b0] bg-gradient-to-b from-[#d4928a] via-[#b03a28] to-[#c85838]"
        >
          <svg width="12" height="10" viewBox="0 0 12 10" fill="none" aria-hidden="true">
            <path d="M2 1l8 8M10 1L2 9" stroke="#5a2018" strokeWidth="4" />
            <path d="M2 1l8 8M10 1L2 9" stroke="#fff" strokeWidth="2" />
          </svg>
        </button>
      </div>
      <div className="flex h-[466px] flex-col border border-[#10141a] bg-[#f0f0f0] pr-[6px] pl-[5px] font-['Liberation_Sans','DejaVu_Sans',sans-serif] text-[11px] leading-4 text-black outline outline-[#a9adb3]">
        <div className="flex h-[36px] items-center pt-[2px]">
          <label htmlFor="look-in" className="w-[86px] text-right">
            Look in:
          </label>
          <div className="ml-[7px] flex h-[23px] w-[260px] items-center border border-[#dfe0e4] bg-white pr-[4px] pl-[6px]">
            <svg width="14" height="16" viewBox="0 0 14 16" aria-hidden="true">
              <path d="M1 1h5v14H1z" fill="#d9bd5c" />
              <path d="M3 2l6-1v14H3z" fill="#f3e09a" />
              <path d="M8 2h4v13H8z" fill="#e8cf78" />
            </svg>
            <select id="look-in" className="ml-[4px] flex-1 appearance-none">
              <option>persian data</option>
            </select>
            <Caret color="#000" />
          </div>
          <div className="ml-[15px] flex items-center gap-[7px]">
            <button type="button" aria-label="Back">
              <Ico>
                <circle cx="8" cy="8" r="7.500" fill="#2c6e9e" stroke="#7da6c0" />
                <path d="M2 10c3 4 9 4 12 0 0 6-11 6-12 0z" fill="#48b8e0" stroke="none" />
                <path d="M12 8H5M8 4.500L4.500 8 8 11.500" stroke="#fff" strokeWidth="2" />
              </Ico>
            </button>
            <button type="button" aria-label="Up one level">
              <Ico>
                <path d="M1.500 5.500h4l1 1h6v8l-11 1z" fill="#f6dc78" stroke="#c4a23c" />
                <path d="M5 14c4-1 5-4 4-8H6.500L11 1l4 5h-2.500c0 5-3 8-7.500 8z" fill="#3fb838" stroke="#1c7a1c" strokeWidth=".8" />
              </Ico>
            </button>
            <button type="button" aria-label="New folder">
              <Ico>
                <path d="M.5 14.500v-10h4l1 1h6v3" fill="#f0cc60" stroke="#c4a23c" />
                <path d="M.5 14.500l4-6h9l-4 6z" fill="#fbe79c" stroke="#c4a23c" />
                <path d="M12.500 1v7M9 4.500h7M10 2l5 5M15 2l-5 5" stroke="#e8542c" />
                <circle cx="12.500" cy="4.500" r="1.500" fill="#fff09a" stroke="none" />
              </Ico>
            </button>
            <button type="button" aria-label="View menu" className="flex items-center gap-[2px]">
              <Ico>
                <path d="M.5 1.500h15v13H.5z" fill="#fff" stroke="#1c62b8" />
                <path d="M0 2.500h16" stroke="#1c62b8" strokeWidth="3" />
                <path d="M3 7h2M7 7h2" stroke="#3858c0" strokeWidth="2" />
                <path d="M11 7h2M3 11h2" stroke="#40a040" strokeWidth="2" />
                <path d="M7 11h2M11 11h2" stroke="#d88030" strokeWidth="2" />
              </Ico>
              <Caret color="#222" />
            </button>
          </div>
        </div>
        <div className="flex min-h-0 flex-1">
          <ul className="flex h-[422px] w-[87px] shrink-0 flex-col gap-[12px] bg-[#f4f4f4] pt-[7px] font-['Open_Sans',sans-serif] text-[12px]">
            {places.map(place => (
              <li key={place.label}>
                <button type="button" className="flex w-full flex-col items-center whitespace-nowrap">
                  {place.art}
                  {place.label}
                </button>
              </li>
            ))}
          </ul>
          <div className="ml-[5px] flex min-w-0 flex-1 flex-col">
            <div className="font-['Open_Sans',sans-serif]">
              <FileList />
            </div>
            <div className="mt-[10px] grid grid-cols-[97px_451px_74px] gap-y-[6px]">
              <label htmlFor="file-name" className="pl-[3px] leading-[21px]">
                File name:
              </label>
              <div className="flex h-[21px] items-center border border-[#e0e2e6] bg-white pr-[4px]">
                <input
                  id="file-name"
                  dir="ltr"
                  className="min-w-0 flex-1 pl-[3px]"
                  defaultValue={
                    '"14-۶سایر معادن.csv" "15-۶غذا-آشامیدني.csv" "17-۶منسوجات.csv" "19-۶محصولات چرمي.csv"'
                  }
                />
                <span className="ml-[6px]">
                  <Caret color="#000" />
                </span>
              </div>
              <div className="relative -mr-[33px] ml-[33px]">
                <button type="button" className="h-[21px] w-full rounded-[3px] border-2 border-[#3cb0dc] bg-gradient-to-b from-[#f0f4f7] to-[#c4d2dc] leading-4">
                  Open
                </button>
                <span className="pointer-events-none absolute -inset-x-[6px] -top-[7px] h-[35px] border-[5px] border-[#22a64a]" />
              </div>
              <label htmlFor="file-type" className="pl-[3px] leading-[21px]">
                Files of type:
              </label>
              <div className="flex h-[21px] items-center rounded-[2px] border border-[#707070] bg-gradient-to-b from-[#f2f2f2] to-[#d0d0d0] pr-[4px]">
                <select id="file-type" className="flex-1 appearance-none pl-[3px]">
                  <option>ASCII files (*.txt;*.csv;*.prn;*.dn;*.stc;*.stk)</option>
                </select>
                <Caret color="#000" />
              </div>
              <button type="button" className="-mr-[33px] ml-[33px] h-[21px] rounded-[3px] border border-[#707070] bg-gradient-to-b from-[#f2f2f2] to-[#d0d0d0] leading-4">
                Cancel
              </button>
              <label className="col-start-2 flex items-center gap-[3px]">
                <input
                  type="checkbox"
                  className="h-[13px] w-[13px] appearance-none border border-[#8e8f8f] bg-gradient-to-br from-[#cfd3d8] to-white"
                />
                Open as read-only
              </label>
            </div>
            <svg width="10" height="10" viewBox="0 0 10 10" fill="#b0b0b0" className="mt-auto mb-px self-end" aria-hidden="true">
              <path d="M7 0h2v2H7zM4 3h2v2H4zM7 3h2v2H7zM1 6h2v2H1zM4 6h2v2H4zM7 6h2v2H7z" />
            </svg>
          </div>
        </div>
      </div>
    </div>
  );
}

export default function App() {
  return (
    <div className="relative flex h-screen flex-col overflow-hidden bg-[#2e3e5e] font-['Open_Sans','DejaVu_Sans',sans-serif]">
      <TitleBar />
      <MenuBar />
      <Toolbar />
      <div className="flex min-h-0 flex-1 gap-[5px] bg-[#2f4060] bg-[radial-gradient(#354769_1px,transparent_1px)] bg-[length:4px_4px] px-[5px] pt-[5px] pr-[6px] pb-[6px]">
        <aside className="flex w-[200px] shrink-0 flex-col gap-[6px]">
          <SymbolsPanel />
          <InterpretationPanel />
        </aside>
        <Chart />
      </div>
      <StatusBar />
      <span className="absolute top-[183px] right-0 h-[10px] w-[7px] bg-black" />
      <OpenDialog />
    </div>
  );
}
